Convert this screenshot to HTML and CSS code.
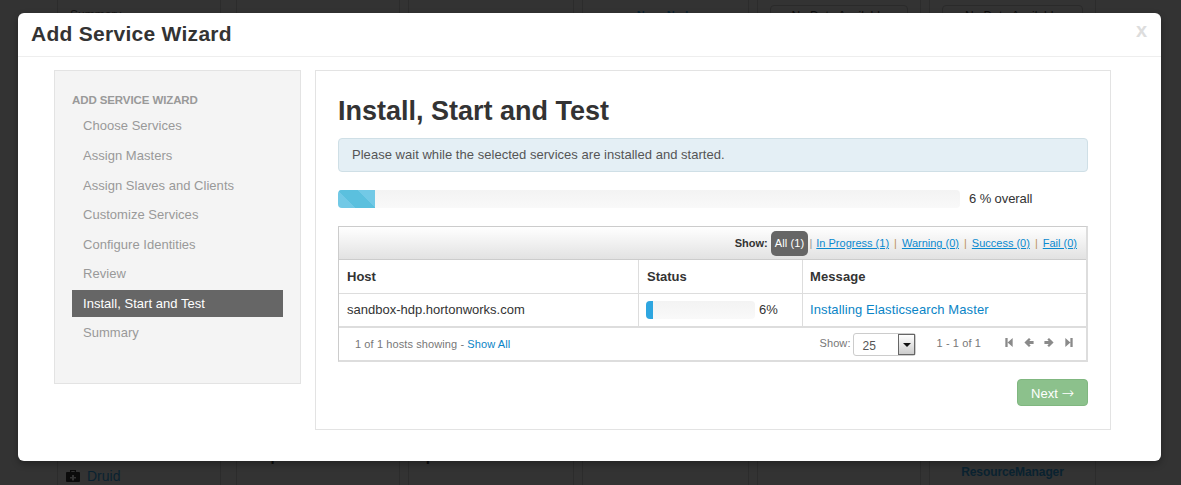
FILE: index.html
```html
<!DOCTYPE html>
<html lang="en">
<head>
    <meta charset="UTF-8">
    <title>Add Service Wizard</title>
    <link rel="stylesheet" href="styles.css">
</head>
<body>
    <div class="backdrop">
        <div class="bg-card bg-nav">
            <div class="bg-top bg-summary">Summary</div>
            <div class="bg-bottom bg-service">
                <svg class="bg-icon" viewBox="0 0 14 14"><path d="M4 3V1h6v2h3a1 1 0 0 1 1 1v8a1 1 0 0 1-1 1H1a1 1 0 0 1-1-1V4a1 1 0 0 1 1-1zm1.300 0h3.400V2H5.300zM6 6v2H4v1.500h2v2h2v-2h2V8H8V6z" fill="#0b0b0b" fill-rule="evenodd"/></svg>
                <span class="bg-link">Druid</span>
            </div>
        </div>
        <div class="bg-card"><div class="bg-bottom bg-title">Heap</div></div>
        <div class="bg-card"><div class="bg-bottom bg-title">Uptime</div></div>
        <div class="bg-card bg-center">
            <div class="bg-top bg-namenode">NameNode</div>
        </div>
        <div class="bg-card bg-center">
            <div class="bg-top bg-nodata">No Data Available</div>
        </div>
        <div class="bg-card bg-center">
            <div class="bg-top bg-nodata">No Data Available</div>
            <div class="bg-bottom bg-rm">ResourceManager</div>
        </div>
    </div>

    <div class="modal">
        <div class="modal-header">
            <h3>Add Service Wizard</h3>
            <span class="close">x</span>
        </div>
        <div class="modal-body">
            <div class="sidebar">
                <div class="nav-header">ADD SERVICE WIZARD</div>
                <a class="nav-item">Choose Services</a>
                <a class="nav-item">Assign Masters</a>
                <a class="nav-item">Assign Slaves and Clients</a>
                <a class="nav-item">Customize Services</a>
                <a class="nav-item">Configure Identities</a>
                <a class="nav-item">Review</a>
                <a class="nav-item active">Install, Start and Test</a>
                <a class="nav-item">Summary</a>
            </div>
            <div class="content">
                <h2>Install, Start and Test</h2>
                <div class="alert">Please wait while the selected services are installed and started.</div>
                <div class="overall">
                    <div class="progress">
                        <div class="bar bar-striped" style="width: 6%"></div>
                    </div>
                    <span class="overall-text">6 % overall</span>
                </div>
                <div class="hosts">
                    <div class="toolbar">
                        <b class="show-label">Show:</b>
                        <span class="filter-active">All (1)</span>
                        <span class="sep sep-first">|</span>
                        <a class="filter">In Progress (1)</a>
                        <span class="sep">|</span>
                        <a class="filter">Warning (0)</a>
                        <span class="sep">|</span>
                        <a class="filter">Success (0)</a>
                        <span class="sep">|</span>
                        <a class="filter">Fail (0)</a>
                    </div>
                    <div class="row row-head">
                        <div class="cell cell-host">Host</div>
                        <div class="cell cell-status">Status</div>
                        <div class="cell cell-message">Message</div>
                    </div>
                    <div class="row row-body">
                        <div class="cell cell-host">sandbox-hdp.hortonworks.com</div>
                        <div class="cell cell-status">
                            <div class="progress progress-small">
                                <div class="bar bar-blue" style="width: 6%"></div>
                            </div>
                            <span class="percent">6%</span>
                        </div>
                        <div class="cell cell-message"><a class="link">Installing Elasticsearch Master</a></div>
                    </div>
                    <div class="table-footer">
                        <div class="showing">1 of 1 hosts showing - <a class="link">Show All</a></div>
                        <div class="pager">
                            <span class="pager-text">Show:</span>
                            <div class="select">
                                <span class="select-value">25</span>
                                <span class="select-arrow"></span>
                            </div>
                            <span class="pager-text page-info">1 - 1 of 1</span>
                            <div class="page-icons">
                                <svg viewBox="0 0 10 12"><path d="M1 1h2.500v10H1zM9 1v10L3.500 6z" fill="#8a8a8a"/></svg>
                                <svg viewBox="0 0 12 12"><path d="M6 .5L8 2.500 6.300 4.300H11.500V7.700H6.300L8 9.500 6 11.500 .5 6z" fill="#8a8a8a"/></svg>
                                <svg viewBox="0 0 12 12"><path d="M6 .5L4 2.500 5.700 4.300H.5V7.700H5.700L4 9.500 6 11.500 11.500 6z" fill="#8a8a8a"/></svg>
                                <svg viewBox="0 0 10 12"><path d="M6.500 1H9v10H6.500zM1 1v10l5.500-5z" fill="#8a8a8a"/></svg>
                            </div>
                        </div>
                    </div>
                </div>
                <div class="actions">
                    <button class="next">Next <span class="next-arrow">&rarr;</span></button>
                </div>
            </div>
        </div>
    </div>
</body>
</html>
```

FILE: styles.css
```css
html, body {
    margin: 0;
    height: 100%;
}
body {
    font-family: "Liberation Sans", Arial, sans-serif;
    font-size: 13px;
    color: #333;
    background: #333;
    overflow: hidden;
    position: relative;
}

/* dimmed page behind the modal */
.backdrop {
    display: grid;
    grid-template-columns: 179px 172px 174px 175px 172px 175px;
    height: 485px;
    padding-left: 57px;
    box-sizing: border-box;
    color: #0d0d0d;
}
.bg-card {
    margin-right: 8px;
    box-sizing: border-box;
    border-left: 1px solid #2c2c2c;
    border-right: 1px solid #2c2c2c;
    display: flex;
    flex-direction: column;
    justify-content: space-between;
}
.bg-nav {
    margin-right: 15px;
}
.bg-center {
    text-align: center;
}
.bg-top {
    padding-top: 8px;
    font-size: 12px;
}
.bg-summary {
    padding-left: 12px;
    color: #141414;
}
.bg-namenode {
    padding-top: 9px;
    color: #0a2230;
    font-size: 11px;
    font-weight: bold;
}
.bg-nodata {
    margin: 5px 12px 0;
    padding-top: 3px;
    border: 1px solid #2a2a2a;
    border-radius: 4px;
}
.bg-bottom {
    margin-top: auto;
}
.bg-service {
    display: flex;
    align-items: center;
    gap: 7px;
    padding: 0 0 0 8px;
    height: 18px;
    font-size: 14px;
}
.bg-icon {
    width: 14px;
    height: 14px;
}
.bg-link {
    color: #0a2230;
}
.bg-title {
    padding: 0 0 21px 6px;
    font-size: 15px;
    font-weight: bold;
}
.bg-rm {
    padding-bottom: 6px;
    color: #0a2230;
    font-size: 12px;
    font-weight: bold;
    letter-spacing: -0.1px;
}

.modal {
    position: absolute;
    left: 18px;
    top: 13px;
    width: 1143px;
    height: 448px;
    background: #fff;
    border-radius: 6px;
    box-shadow: 0 3px 7px rgba(0, 0, 0, 0.3);
}
.modal-header {
    display: flex;
    justify-content: space-between;
    align-items: center;
    height: 43px;
    padding: 0 14px 0 13px;
    border-bottom: 1px solid #eee;
}
.modal-header h3 {
    margin: -2px 0 0;
    font-size: 21px;
    letter-spacing: 0.28px;
    font-weight: bold;
    color: #333;
}
.close {
    font-size: 20px;
    font-weight: bold;
    color: #ddd;
    margin-top: -8px;
}
.modal-body {
    display: flex;
    align-items: flex-start;
    gap: 14px;
    padding: 13px 50px 0 36px;
}

.sidebar {
    width: 247px;
    height: 314px;
    box-sizing: border-box;
    background: #f4f4f4;
    border: 1px solid #e3e3e3;
    padding: 21px 17px 0;
}
.nav-header {
    font-size: 11.500px;
    letter-spacing: -0.1px;
    font-weight: bold;
    color: #999;
    line-height: 16px;
    margin-bottom: 3.500px;
}
.nav-item {
    display: block;
    height: 29.500px;
    line-height: 29px;
    padding-left: 11px;
    font-size: 13px;
    letter-spacing: 0.03px;
    color: #999;
}
.nav-header + .nav-item {
    margin-top: -1px;
    height: 30.500px;
}
.nav-item.active {
    background: #666;
    color: #fff;
    height: 27px;
    line-height: 27px;
    margin: 1px 0 1px;
}

.content {
    width: 796px;
    height: 360px;
    box-sizing: border-box;
    border: 1px solid #e3e3e3;
    padding: 0 22px;
}
.content h2 {
    margin: 25px 0 0;
    font-size: 27px;
    line-height: 31px;
    font-weight: bold;
    color: #333;
}
.alert {
    margin-top: 11px;
    height: 34px;
    box-sizing: border-box;
    line-height: 31px;
    padding-left: 13px;
    background: #e4eff5;
    border: 1px solid #cfdfe6;
    border-radius: 4px;
    font-size: 13px;
    letter-spacing: 0.03px;
    color: #555;
}

.overall {
    display: flex;
    align-items: center;
    margin-top: 18px;
}
.progress {
    width: 622px;
    height: 18px;
    background: linear-gradient(#f3f3f3, #f9f9f9);
    border-radius: 4px;
    overflow: hidden;
}
.bar {
    height: 100%;
}
.bar-striped {
    background-color: #72c9e6;
    background-image: linear-gradient(45deg, transparent 25%, #5bc0de 25%, #5bc0de 50%, transparent 50%, transparent 75%, #5bc0de 75%);
    background-size: 40px 40px;
    background-position: 20px 0;
}
.bar-blue {
    background: #2ea6e0;
}
.overall-text {
    margin-left: 9px;
    font-size: 13px;
    letter-spacing: -0.1px;
    margin-top: -1px;
}

.hosts {
    margin-top: 18px;
    border: 2px solid #ddd;
    border-top: 1px solid #ccc;
    border-left: 1px solid #ccc;
}
.toolbar {
    display: flex;
    justify-content: flex-end;
    align-items: center;
    height: 32px;
    padding-right: 9px;
    background: linear-gradient(#fff, #e2e2e2);
    border-bottom: 1px solid #ccc;
    font-size: 11px;
}
.show-label {
    color: #333;
    margin-right: 3px;
}
.filter-active {
    background: #666;
    color: #fff;
    border-radius: 5px;
    padding: 0 4px;
    letter-spacing: 0.15px;
    line-height: 25px;
}
.sep {
    color: #c09060;
    margin: 0 5px;
}
.sep-first {
    margin: 0 4px 0 1px;
    color: #999;
}
.filter {
    color: #0a8ad0;
    text-decoration: underline;
}
.row {
    display: flex;
    height: 33px;
    border-bottom: 1px solid #ddd;
    box-sizing: border-box;
}
.row-head {
    font-weight: bold;
    font-size: 13px;
    height: 34px;
}
.row-body .cell {
    padding-bottom: 2px;
}
.cell {
    display: flex;
    align-items: center;
    padding-left: 8px;
    box-sizing: border-box;
    border-right: 1px solid #ddd;
}
.cell-host {
    width: 300px;
}
.cell-status {
    width: 164px;
}
.cell-message {
    flex: 1;
    padding-left: 7px;
    border-right: none;
    letter-spacing: 0.1px;
}
.progress-small {
    width: 109px;
    height: 18px;
    margin-left: -1px;
    margin-top: 2px;
}
.percent {
    margin-left: 4px;
}
.link {
    color: #0a84c6;
}

.table-footer {
    display: flex;
    justify-content: space-between;
    align-items: center;
    height: 32px;
    border-top: 1px solid #ddd;
    padding: 0 12px 0 16px;
    font-size: 11px;
    letter-spacing: 0.1px;
    color: #777;
}
.pager {
    display: flex;
    align-items: center;
}
.pager-text {
    margin-top: -3px;
}
.select {
    display: flex;
    justify-content: space-between;
    width: 63px;
    height: 23px;
    box-sizing: border-box;
    margin-left: 2px;
    border: 1px solid #ccc;
    border-radius: 3px;
    font-size: 12px;
    color: #555;
}
.select-value {
    padding: 5px 0 0 9px;
}
.select-arrow {
    width: 17px;
    border: 1px solid #666;
    box-sizing: border-box;
    background: linear-gradient(#fff, #ccc);
    position: relative;
}
.select-arrow::after {
    content: "";
    position: absolute;
    left: 4px;
    top: 8px;
    border: 4px solid transparent;
    border-top: 4px solid #111;
}
.page-info {
    margin-left: 21px;
}
.page-icons {
    display: flex;
    align-items: center;
    gap: 10px;
    margin: -3px 0 0 23px;
}
.page-icons svg {
    width: 10px;
    height: 11px;
}

.actions {
    display: flex;
    justify-content: flex-end;
    margin-top: 17px;
}
.next {
    width: 71px;
    height: 27px;
    background: #8cc18c;
    border: 1px solid #80b780;
    border-radius: 4px;
    color: #fff;
    font-family: inherit;
    font-size: 13px;
    padding: 0;
}
.next-arrow {
    font-family: "DejaVu Sans", sans-serif;
    font-size: 15px;
    font-weight: 200;
}
```
